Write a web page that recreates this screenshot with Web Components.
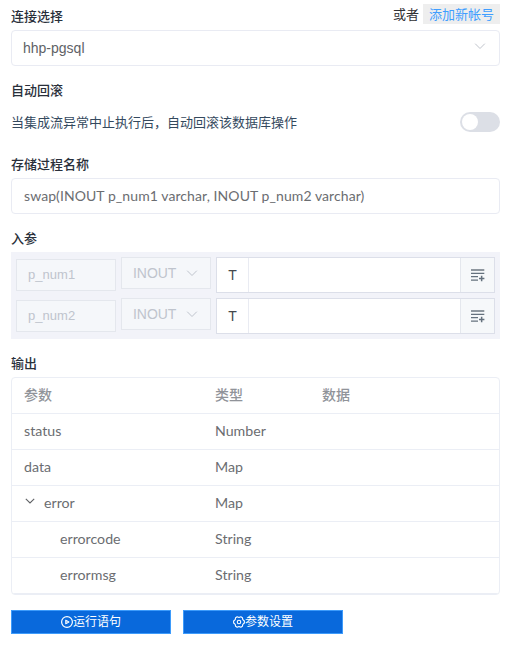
<!DOCTYPE html>
<html lang="zh-CN"><head><meta charset="utf-8"><title>数据库设置</title>
<style>
body{margin:0;background:#fff;font-family:"Liberation Sans","Noto Sans CJK SC",sans-serif;font-size:13px;color:#606266;--humanist:Lato,"Noto Sans CJK SC",sans-serif}
</style></head><body><db-form></db-form>
<script>
const define=(name,html,setup)=>{
  const t=document.createElement('template');
  t.innerHTML='<style>*{box-sizing:border-box}:host{box-sizing:border-box;display:block}</style>'+html;
  customElements.define(name,class extends HTMLElement{
    constructor(){super();this.attachShadow({mode:'open'}).append(t.content.cloneNode(true));}
    connectedCallback(){if(setup)setup(this,this.shadowRoot);}
  });
};
const icons={
  chevron:'<svg width="12" height="12" viewBox="0 0 12 12" fill="none" stroke="currentColor"><path d="M1.2 3.7 6 8.5 10.8 3.7"/></svg>',
  small:'<svg width="12" height="12" viewBox="0 0 12 12" fill="none" stroke="currentColor" stroke-width="1.1"><path d="M1.8 3.8 6 8 10.2 3.8"/></svg>',
  list:'<svg width="14" height="14" viewBox="0 0 14 14"><path fill="#8f979f" d="M0 1h13.3v2H0z"/><path fill="#65717e" d="M0 4.8h13.3V6H0zM0 8h7v1.3H0zM0 11.4h7v1.3H0zM9.9 7.8h1.5v2h2v1.5h-2v2H9.9v-2H8V9.8h1.9z"/></svg>',
  play:'<svg width="12" height="12" viewBox="0 0 12 12" fill="none" stroke="currentColor" stroke-width="1.2"><circle cx="6" cy="6" r="5.4"/><path d="M4.7 4v4l3.5-2z" fill="currentColor" fill-opacity=".65" stroke-width=".9"/></svg>',
  gear:'<svg width="12" height="12" viewBox="0 0 13 13" fill="none" stroke="currentColor" stroke-width="1.2" stroke-linejoin="round"><path d="M4.5.9 6.5 1.6 8.5.9 10.2 1.9 10.6 4 12.3 5.4v2.2L10.6 9 10.2 11.1 8.5 12.1 6.5 11.4 4.5 12.1 2.8 11.1 2.4 9 .7 7.6V5.4L2.4 4 2.8 1.9z"/><circle cx="6.5" cy="6.5" r="1.9"/></svg>'
};
define('ui-icon','<style>:host{display:inline-flex;flex:none}svg{display:block}</style><span></span>',(h,r)=>{r.querySelector('span').innerHTML=icons[h.getAttribute('name')];});
define('section-title','<style>:host{height:20px;padding-top:1px;line-height:20px;font-size:13px;font-weight:500;color:#292f3a}</style><slot></slot>');
define('text-box','<style>:host{display:flex;align-items:center;height:36px;border:1px solid #e9ebf3;border-radius:4px;background:#fff;padding:0 13px 0 12px}span{flex:1;white-space:pre}</style><span><slot></slot></span><slot name="suffix"></slot>');
define('toggle-switch','<style>:host{width:40px;height:20px;border-radius:10px;background:#dcdfe6;padding:2px}i{display:block;width:16px;height:16px;border-radius:50%;background:#fff}</style><i></i>');
define('param-row',`<style>:host{display:flex;gap:5px;height:36px}
.name,.mode{background:#f5f7fa;border:1px solid #e4e7ed;color:#bfc4cd;height:32px;display:flex;align-items:center}
.name{width:100px;margin-top:2px;padding:0 0 2px 11px;font-size:13px;letter-spacing:.05px}.mode{width:90px;padding:0 12px 0 11px;justify-content:space-between;font-size:14px;letter-spacing:-.05px}
.value{flex:1;display:flex;background:#fff;border:1px solid #dcdfe9}.type{width:32px;border-right:1px solid #e9ebf2;display:grid;place-items:center;font-size:14px;color:#45484d}
.blank{flex:1}.add{width:34px;display:grid;place-items:center;background:#f6f8fa;border-left:1px solid #e4e7ed}
</style><div class="name"><slot></slot></div><div class="mode">INOUT<ui-icon name="chevron"></ui-icon></div><div class="value"><div class="type">T</div><div class="blank"></div><div class="add"><ui-icon name="list"></ui-icon></div></div>`);
define('param-list','<style>:host{display:flex;flex-direction:column;gap:5px;height:87px;background:#f2f3f9;padding:5px}</style><slot></slot>');
define('output-row',`<style>:host{display:grid;grid-template-columns:191px 107px 1fr;align-items:center;height:36px;border-bottom:1px solid #ebeef5;padding:0 0 2px 12px;font:14.2px var(--humanist);color:#6b6d71}
:host([head]){font-size:14px;font-weight:500;color:#909399;padding-bottom:3px}:host([level="1"]) .key{padding-left:20px}:host([level="2"]) .key{padding-left:36px}:host([open]) .key{padding-left:0}.key{display:flex;align-items:center}ui-icon{margin:-3px 8px 0 0;color:#606266}</style><div class="key"><slot></slot></div><div class="kind"></div><div class="data"></div>`,(h,r)=>{
  r.querySelector('.kind').textContent=h.getAttribute('kind');
  r.querySelector('.data').textContent=h.getAttribute('data')||'';
  if(h.hasAttribute('open')){const i=document.createElement('ui-icon');i.setAttribute('name','small');r.querySelector('.key').prepend(i);}
});
define('output-table','<style>:host{height:218px;border:1px solid #ebeef5;border-radius:4px;overflow:hidden}</style><slot></slot>');
define('action-button','<style>:host{display:flex;align-items:center;justify-content:center;width:160px;height:24px;background:#0969dc;border:1px solid #3d9bfb;color:#fff;font-size:12px;line-height:22px}</style><slot></slot>');
define('db-form',`<style>:host{display:flex;flex-direction:column;padding:4px 11px 0;width:511px;height:658px}
.top{display:flex;justify-content:space-between;height:26px}.top section-title{margin-top:2px}.account{display:flex;gap:4px;line-height:22px;height:20px;color:#303133}.add{width:77px;background:#eee;color:#409eff;text-align:center}
.select{padding-left:11px;padding-bottom:1px;font-size:14px}.select ui-icon{color:#c0c4cc;margin-top:-3px}
.rollback{margin-top:14px}.option{display:flex;justify-content:space-between;align-items:center;height:20px;margin-top:12px;color:#34495e}.option span{margin-top:-2px}
.procedure{margin-top:22px}.signature{margin-top:4px;padding-bottom:2px;font:14px var(--humanist);letter-spacing:.08px;color:#6b6d71}.inputs{margin-top:14px}param-list{margin-top:4px}.output{margin-top:14px}output-table{margin-top:4px}
.actions{display:flex;gap:12px;margin-top:15px}</style>
<div class="top"><section-title>连接选择</section-title><div class="account"><span>或者</span><span class="add">添加新帐号</span></div></div>
<text-box class="select">hhp-pgsql<ui-icon slot="suffix" name="chevron"></ui-icon></text-box>
<section-title class="rollback">自动回滚</section-title>
<div class="option"><span>当集成流异常中止执行后，自动回滚该数据库操作</span><toggle-switch></toggle-switch></div>
<section-title class="procedure">存储过程名称</section-title>
<text-box class="signature">swap(INOUT p_num1 varchar, INOUT p_num2 varchar)</text-box>
<section-title class="inputs">入参</section-title>
<param-list><param-row>p_num1</param-row><param-row>p_num2</param-row></param-list>
<section-title class="output">输出</section-title>
<output-table><output-row head kind="类型" data="数据">参数</output-row><output-row kind="Number">status</output-row><output-row kind="Map">data</output-row><output-row level="1" open kind="Map">error</output-row><output-row level="2" kind="String">errorcode</output-row><output-row level="2" kind="String">errormsg</output-row></output-table>
<div class="actions"><action-button><ui-icon name="play"></ui-icon>运行语句</action-button><action-button><ui-icon name="gear"></ui-icon>参数设置</action-button></div>`);
</script></body></html>
